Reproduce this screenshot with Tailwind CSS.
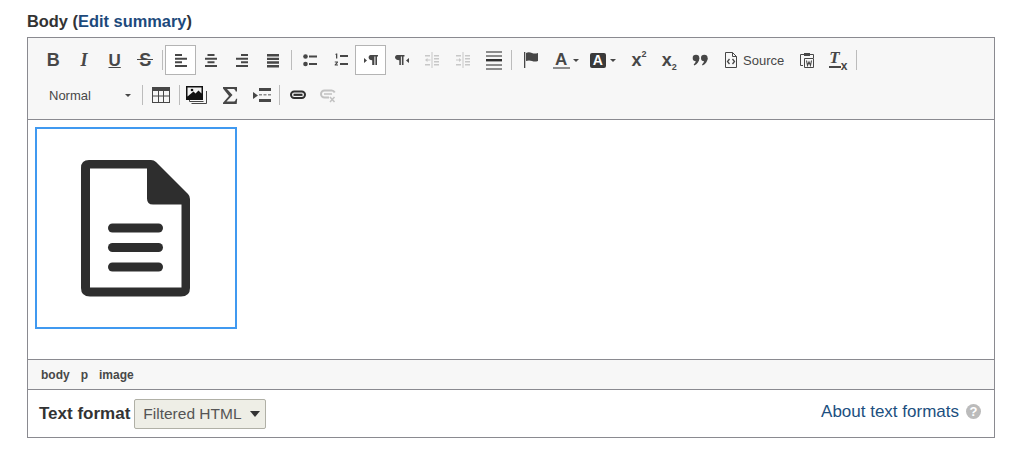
<!DOCTYPE html>
<html lang="en">
<head>
    <meta charset="UTF-8">
    <title>Body editor</title>
    <script src="https://cdn.jsdelivr.net/npm/@tailwindcss/browser@4"></script>
</head>
<body class="bg-white font-['Liberation_Sans',Arial,sans-serif] text-[#333]">
    <div class="w-[1013px] h-[453px] overflow-hidden pt-[12px] pl-[27px]">
        <!-- Label -->
        <div class="h-[25px] text-[16.400px] leading-[19px] font-bold">Body (<a class="text-[#1d4a7c]">Edit summary</a>)</div>

        <div class="w-[968px] border border-[#8a8a90]">
            <!-- Toolbar -->
            <div class="h-[82px] bg-[#f7f7f7] border-b border-[#8a8a90] pt-[7px] pl-[10px] text-[#474747]">
                <div class="flex h-[30px] items-center">
                    <div class="w-[30.670px] text-center text-[18px] font-bold leading-none">B</div>
                    <div class="w-[30.670px] text-center text-[18px] font-bold italic font-['Liberation_Serif',serif] leading-none">I</div>
                    <div class="w-[30.670px] text-center text-[17px] font-bold underline leading-none">U</div>
                    <div class="flex w-[30.670px] justify-center text-[18px] font-bold leading-none">
                        <span class="relative">S<span class="absolute left-[-2px] right-[-2px] top-[8px] h-[2px] bg-[#474747] border-b border-[#f7f7f7]"></span></span>
                    </div>
                    <div class="w-px h-[20px] bg-[#bcbcbc] ml-[1.500px] mr-[2px]"></div>
                    <div class="flex w-[31px] h-[30px] items-center justify-center border border-[#b4b4b4] bg-white">
                        <svg class="w-4 h-4" viewBox="0 0 16 16" fill="#474747"><path d="M2 2h7v2H2zM2 5.700h12v2H2zM2 9.300h7v2H2zM2 13h12v2H2z"/></svg>
                    </div>
                    <div class="flex w-[30.670px] justify-center">
                        <svg class="w-4 h-4" viewBox="0 0 16 16" fill="#474747"><path d="M4.500 2h7v2h-7zM2 5.700h12v2H2zM4.500 9.300h7v2h-7zM2 13h12v2H2z"/></svg>
                    </div>
                    <div class="flex w-[30.670px] justify-center">
                        <svg class="w-4 h-4" viewBox="0 0 16 16" fill="#474747"><path d="M7 2h7v2H7zM2 5.700h12v2H2zM7 9.300h7v2H7zM2 13h12v2H2z"/></svg>
                    </div>
                    <div class="flex w-[30.670px] justify-center">
                        <svg class="w-4 h-4" viewBox="0 0 16 16" fill="#474747"><path d="M2 2h12v2.400H2zM2 5.700h12v2.400H2zM2 9.300h12v2.400H2zM2 13h12v2.400H2z"/></svg>
                    </div>
                    <div class="w-px h-[20px] bg-[#bcbcbc] ml-[3px] mr-[3px]"></div>
                    <!-- Lists -->
                    <div class="flex w-[30.670px] justify-center">
                        <svg class="w-4 h-4" viewBox="0 0 16 16" fill="#474747"><circle cx="3.500" cy="4.500" r="2.300"/><circle cx="3.500" cy="12" r="2.300"/><path d="M7 3.500h8v2H7zM7 11h8v2H7z"/></svg>
                    </div>
                    <div class="flex w-[30.670px] justify-center">
                        <svg class="w-4 h-4" viewBox="0 0 16 16" fill="#474747"><path d="M3 1.500h1.300v5H3V2.800H2.100zM1.800 9.500H5v1.100L3.300 12.600H5v1H1.700v-1l1.900-2.100H1.800zM7 3h8v2H7zM7 11h8v2H7z"/></svg>
                    </div>
                    <!-- Direction -->
                    <div class="flex w-[31px] h-[30px] items-center justify-center border border-[#b4b4b4] bg-white -ml-[1px]">
                        <svg class="w-4 h-4" viewBox="0 0 16 16" fill="#474747"><path d="M1 6l3 2.500L1 11zM7.500 3h7.500v1.400h-1V13h-1.600V4.400h-1V13H9.200V8.300C7 8.300 5.600 7.200 5.600 5.600 5.600 4 6.500 3 7.500 3z"/></svg>
                    </div>
                    <div class="flex w-[30.670px] justify-center">
                        <svg class="w-4 h-4" viewBox="0 0 16 16" fill="#474747"><path d="M3 3h7.500v1.400h-1V13H7.900V4.400h-1V13H5.300V8.300C3 8.300 1 7.200 1 5.600 1 4 2 3 3 3zM15 6l-3 2.500 3 2.500z"/></svg>
                    </div>
                    <div class="flex w-[30.670px] justify-center">
                        <svg class="w-4 h-4" viewBox="0 0 16 16" fill="#c8c8c8"><path d="M7.500 0h1v16h-1zM10 3h5v1.600h-5zM10 6h5v1.600h-5zM10 9h5v1.600h-5zM10 12h5v1.600h-5zM1 3h5v1.600H1zM1 12h5v1.600H1zM1 8l2.500-2v1.400h3v1.200h-3V10z"/></svg>
                    </div>
                    <div class="flex w-[30.670px] justify-center">
                        <svg class="w-4 h-4" viewBox="0 0 16 16" fill="#c8c8c8"><path d="M7.500 0h1v16h-1zM10 3h5v1.600h-5zM10 6h5v1.600h-5zM10 9h5v1.600h-5zM10 12h5v1.600h-5zM1 3h5v1.600H1zM1 12h5v1.600H1zM6.500 8L4 6v1.400H1v1.200h3V10z"/></svg>
                    </div>
                    <div class="flex w-[30.670px] justify-center">
                        <svg class="w-4 h-[19px]" viewBox="0 0 16 19"><path fill="#8c8c8c" d="M0 0h16v2H0zM0 4h16v2H0zM0 13h16v2H0zM0 17h16v2H0z"/><path fill="#2f2f2f" d="M0 8h16v2.400H0z"/></svg>
                    </div>
                    <div class="w-px h-[20px] bg-[#bcbcbc] ml-[2px] mr-[4px]"></div>
                    <!-- Language and colours -->
                    <div class="flex w-[30.670px] justify-center">
                        <svg class="w-4 h-4" viewBox="0 0 16 16" fill="#474747"><path d="M1 0h1.300v16H1zM3 1c2-1 4-.8 6 0s3.500.6 6 0v8c-2.500.8-4 .8-6 0s-4-.8-6 0z"/></svg>
                    </div>
                    <div class="flex w-[38px] items-center pl-[6px]">
                        <div class="w-[17px] text-center text-[17px] font-bold leading-[15px] border-b-2 border-[#8c8c8c]">A</div>
                        <div class="ml-[3px] border-x-[3px] border-t-[3px] border-x-transparent border-t-[#474747]"></div>
                    </div>
                    <div class="flex w-[38px] items-center pl-[5px]">
                        <div class="w-[16px] h-[15px] shrink-0 rounded-[2px] bg-[#3a3a3a] text-center text-[14px] font-bold leading-[15px] text-white">A</div>
                        <div class="ml-[4px] border-x-[3px] border-t-[3px] border-x-transparent border-t-[#474747]"></div>
                    </div>
                    <div class="flex w-[30.670px] justify-center ml-[1px]">
                        <div class="text-[18px] font-bold leading-none">x<sup class="text-[9px] align-[5px] leading-none">2</sup></div>
                    </div>
                    <div class="flex w-[30px] justify-center">
                        <div class="text-[18px] font-bold leading-none">x<sub class="text-[9px] align-[-2px] leading-none">2</sub></div>
                    </div>
                    <div class="flex w-[30.670px] justify-center">
                        <svg class="w-4 h-4" viewBox="0 0 16 16" fill="#474747"><circle cx="4" cy="6" r="3.300"/><circle cx="12.300" cy="6" r="3.300"/><path d="M7.300 6c0 3.500-2 6-5 7.500l-.6-1C3 11.500 4 9.500 4 7.500zM15.600 6c0 3.500-2 6-5 7.500l-.6-1c1.300-1 2.300-3 2.300-5z"/></svg>
                    </div>
                    <!-- Source -->
                    <div class="flex w-[17px] justify-center ml-[7px]">
                        <svg class="w-[14px] h-[16px]" viewBox="0 0 14 16" fill="none" stroke="#474747"><path d="M1.500.5h7l4 4v11h-11z"/><path d="M8.500.5v4h4" /><path stroke-width="1.300" d="M5.500 7L3.500 9.500 5.500 12M8.500 7l2 2.500-2 2.500"/></svg>
                    </div>
                    <div class="ml-[4px] text-[13px] leading-none text-[#474747]">Source</div>
                    <div class="flex w-[30px] justify-center ml-[8px]">
                        <svg class="w-4 h-4" viewBox="0 0 16 16" fill="none" stroke="#474747"><path d="M5 2.500H1.500v11H4M11 2.500h3.500V6"/><path fill="#474747" stroke="none" d="M5 1h6v3H5z"/><path d="M5.500 6.500h9v9h-9z"/><path stroke-width="1.100" d="M7.500 8.500l1 5 1.500-3.500 1.500 3.500 1-5"/></svg>
                    </div>
                    <div class="flex w-[30.670px] justify-center">
                        <div class="relative w-[18px] h-[16px]">
                            <div class="absolute left-0 top-[-2px] text-[17px] font-bold italic font-['Liberation_Serif',serif] leading-[16px] border-b-2 border-[#474747] w-[12px] text-center">T</div>
                            <div class="absolute right-[-1px] bottom-[-4px] text-[12px] font-bold leading-none">x</div>
                        </div>
                    </div>
                    <div class="w-px h-[20px] bg-[#bcbcbc] ml-[3px]"></div>
                </div>
                <div class="flex h-[30px] items-center mt-[5px]">
                    <div class="flex w-[104px] items-center pl-[11px] pr-[11px] justify-between">
                        <span class="text-[13px] leading-none text-[#484848]">Normal</span>
                        <div class="border-x-[3px] border-t-[3px] border-x-transparent border-t-[#474747]"></div>
                    </div>
                    <div class="w-px h-[20px] bg-[#bcbcbc] mr-[3px]"></div>
                    <div class="flex w-[30.670px] justify-center">
                        <svg class="w-[18px] h-4" viewBox="0 0 18 16"><path fill="#474747" d="M0 0h18v16H0z"/><path fill="#f7f7f7" d="M1 4h5v4.500H1zM7 4h4v4.500H7zM12 4h5v4.500h-5zM1 9.500h5V15H1zM7 9.500h4V15H7zM12 9.500h5V15h-5z"/></svg>
                    </div>
                    <div class="w-px h-[20px] bg-[#bcbcbc] ml-[2px]"></div>
                    <div class="flex w-[30px] justify-center pl-[4px]">
                        <svg class="w-[21px] h-[20px] shrink-0" viewBox="0 0 21 20"><path fill="none" stroke="#474747" d="M3.500 4v12.500h14M5.500 18.500h15V6"/><path fill="#111" d="M0 1h17v14H0z"/><path fill="#f2f2f2" d="M1.500 2.500h14v6l-3-3-3 3-2-2-6 5z"/><circle cx="6" cy="5" r="1.300" fill="#111"/></svg>
                    </div>
                    <div class="flex w-[34px] justify-center ml-[3px]">
                        <svg class="w-4 h-[17px]" viewBox="0 0 16 17" fill="#474747"><path d="M1 0h14v4.500h-1.300C13.200 2.600 12.500 2 10.500 2H5l5.500 6L4.500 14.500H11c1.800 0 2.600-.8 3-2.800h1.200L14.700 17H1v-1.300L7 9 1 1.500z"/></svg>
                    </div>
                    <div class="flex w-[30.670px] justify-center">
                        <svg class="w-[19px] h-4" viewBox="0 0 19 16"><path fill="#474747" d="M1 5l5 3.500L1 12zM7 1h12v3H7zM7 12h12v3H7z"/><path fill="#8c8c8c" d="M7 7h3v1.500H7zM11.500 7h3v1.500h-3zM16 7h3v1.500h-3z"/></svg>
                    </div>
                    <div class="w-px h-[20px] bg-[#bcbcbc] ml-[2px] mr-[2px]"></div>
                    <div class="flex w-[30.670px] justify-center">
                        <svg class="w-4 h-4" viewBox="0 0 16 16" fill="none" stroke="#2f2f2f"><rect x="1" y="4.500" width="14" height="6.500" rx="3.200" stroke-width="2"/><path stroke-width="2.200" d="M3.500 7.800h9"/></svg>
                    </div>
                    <div class="flex w-[30.670px] justify-center">
                        <svg class="w-4 h-4" viewBox="0 0 16 16" fill="none" stroke="#c2c2c2"><path stroke-width="2" d="M9 10.500H4.500a3.500 3.500 0 010-7h7a3.500 3.500 0 013.200 2"/><path stroke-width="1.500" d="M4 7h8M10 10l4.500 5M14.500 10L10 15"/></svg>
                    </div>
                </div>
            </div>

            <!-- Editing area -->
            <div class="h-[240px] p-[7px] border-b border-[#8a8a90]">
                <div class="flex w-[202px] h-[202px] items-center justify-center border-2 border-[#4099f0] pr-[1px]">
                    <svg class="w-[109px] h-[137px]" viewBox="0 0 109 137" fill="#2e2e2e">
                        <path fill-rule="evenodd" d="M8 0H70Q73 0 75 2L107 34Q109 36 109 39V128Q109 136.500 100 136.500H9Q0 136.500 0 128V8Q0 0 8 0ZM9 8.500V127.500H100.500V44.500H72Q66 44.500 66 38.500V8.500Z"/>
                        <rect x="27" y="63.500" width="55" height="9" rx="4.500"/>
                        <rect x="27" y="83" width="55" height="9" rx="4.500"/>
                        <rect x="27" y="102.500" width="55" height="9" rx="4.500"/>
                    </svg>
                </div>
            </div>

            <!-- Element path -->
            <div class="flex h-[30px] items-center gap-[11px] bg-[#f7f7f7] border-b border-[#8a8a90] pl-[13px] text-[12px] font-bold text-[#484848]">
                <span>body</span><span>p</span><span>image</span>
            </div>

            <!-- Text format -->
            <div class="flex h-[47px] items-center justify-between pl-[11px] pr-[13px]">
                <div class="flex items-center">
                    <span class="text-[17px] font-bold text-[#333]">Text format</span>
                    <div class="flex w-[132px] h-[30px] items-center justify-between ml-[4px] pl-[8px] pr-[5px] rounded-[2px] border border-[#b0b0a6] bg-[#eeeee6] text-[15.500px] text-[#555]">
                        <span>Filtered HTML</span>
                        <div class="border-x-[5px] border-t-[6px] border-x-transparent border-t-[#333]"></div>
                    </div>
                </div>
                <div class="flex items-center gap-[7px] mb-[4px]">
                    <a class="text-[17px] text-[#1c4f80]">About text formats</a>
                    <div class="w-[15px] h-[15px] rounded-full bg-[#bbb] text-center text-[13px] font-bold leading-[15px] text-white">?</div>
                </div>
            </div>
        </div>
    </div>
</body>
</html>
